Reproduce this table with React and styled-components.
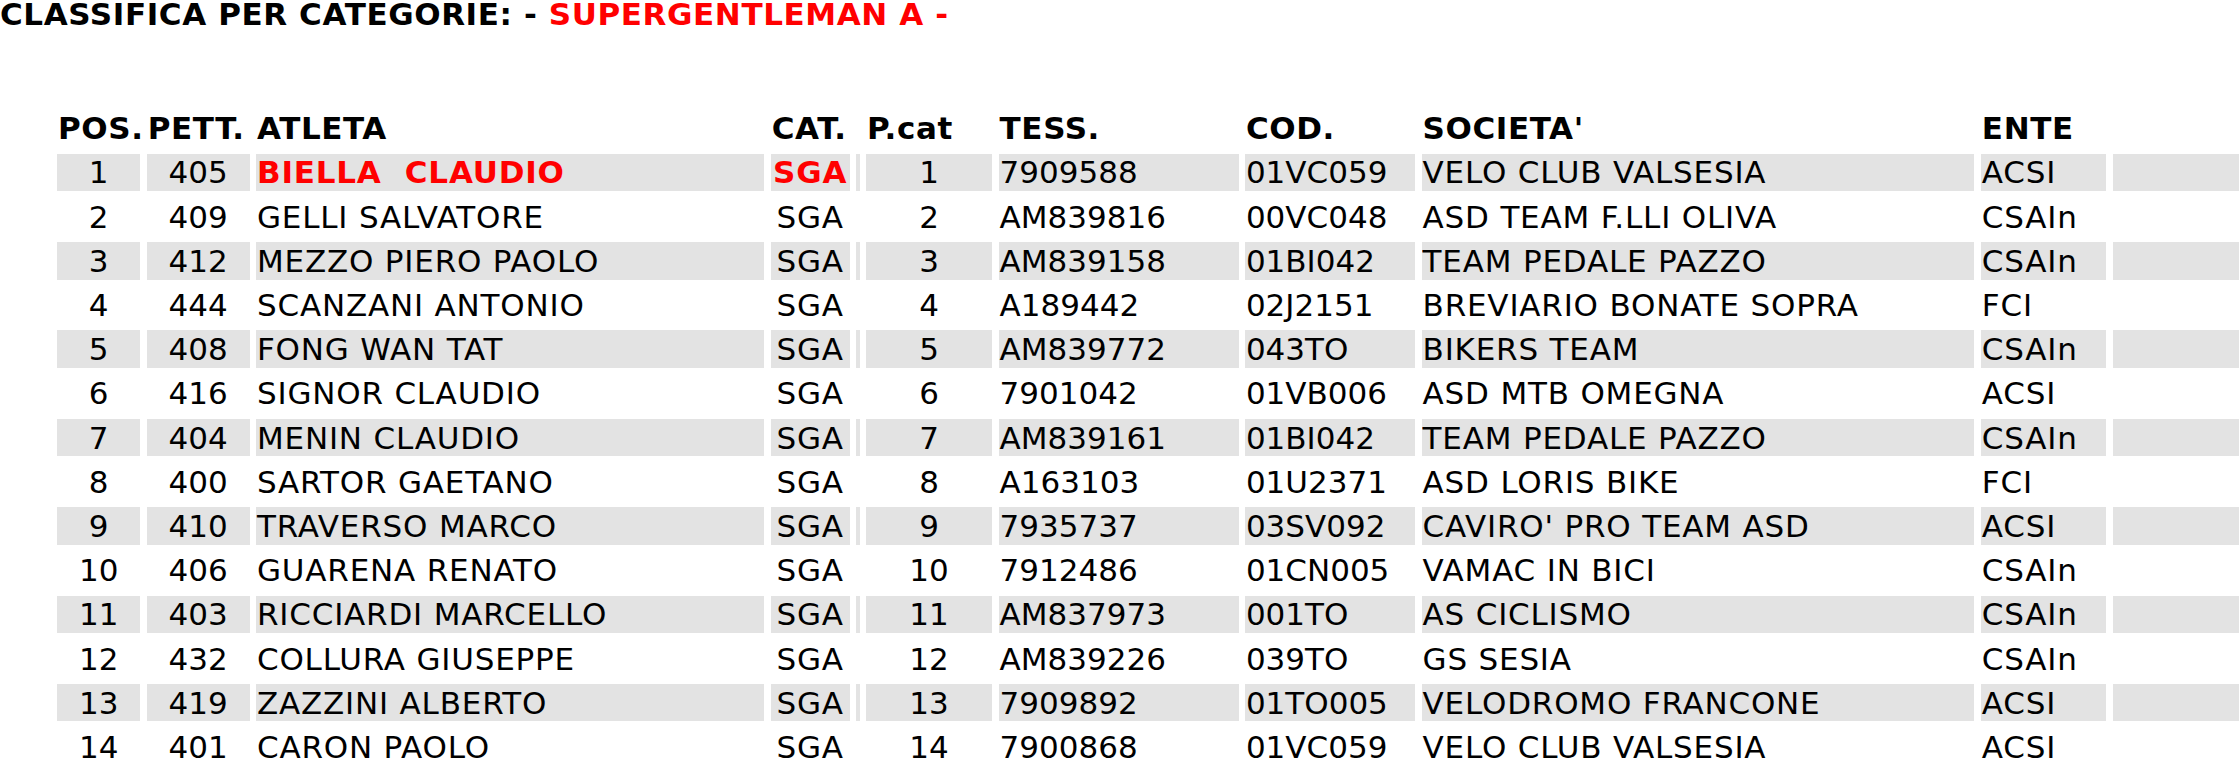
import React from "react";
import styled, { createGlobalStyle } from "styled-components";

const GlobalStyle = createGlobalStyle`
  html, body {
    margin: 0;
    padding: 0;
    background: #ffffff;
    overflow: hidden;
  }
  body {
    font-family: Verdana, "DejaVu Sans", sans-serif;
    color: #000000;
  }
`;

const Page = styled.div`
  width: 2239px;
  height: 759px;
  overflow: hidden;
`;

const Title = styled.h1`
  margin: 0;
  font-size: 31px;
  line-height: 28px;
  font-weight: bold;
  letter-spacing: 0.6px;
  white-space: pre;
`;

const Red = styled.span`
  color: #ff0000;
`;

const Grid = styled.div`
  display: grid;
  grid-template-columns: 83.3px 102.9px 508.3px 78.9px 3.6px 126.3px 239.9px 170.3px 552.9px 125.3px 160px;
  grid-auto-rows: 37.5px;
  column-gap: 6.4px;
  row-gap: 6.7px;
  margin: 81.5px 0 0 57px;
  width: max-content;
`;

const HeadCell = styled.div`
  display: flex;
  align-items: center;
  justify-content: flex-start;
  font-size: 31px;
  font-weight: bold;
  letter-spacing: 0.6px;
  white-space: pre;
  padding-left: 1px;
`;

const Cell = styled.div`
  display: flex;
  align-items: center;
  justify-content: ${(p) => (p.$align === "center" ? "center" : "flex-start")};
  padding-left: ${(p) => (p.$align === "center" ? "0" : "1px")};
  background: ${(p) => (p.$striped ? "#e3e3e3" : "transparent")};
  color: ${(p) => (p.$red ? "#ff0000" : "#000000")};
  font-weight: ${(p) => (p.$red ? "bold" : "normal")};
  letter-spacing: ${(p) => (p.$text ? "0.8px" : "0")};
  font-size: 31px;
  white-space: pre;
  overflow: hidden;
`;

const headers = ["POS.", "PETT.", "ATLETA", "CAT.", "", "P.cat", "TESS.", "COD.", "SOCIETA'", "ENTE", ""];

const rows = [
  ["1", "405", "BIELLA  CLAUDIO", "SGA", "1", "7909588", "01VC059", "VELO CLUB VALSESIA", "ACSI"],
  ["2", "409", "GELLI SALVATORE", "SGA", "2", "AM839816", "00VC048", "ASD TEAM F.LLI OLIVA", "CSAIn"],
  ["3", "412", "MEZZO PIERO PAOLO", "SGA", "3", "AM839158", "01BI042", "TEAM PEDALE PAZZO", "CSAIn"],
  ["4", "444", "SCANZANI ANTONIO", "SGA", "4", "A189442", "02J2151", "BREVIARIO BONATE SOPRA", "FCI"],
  ["5", "408", "FONG WAN TAT", "SGA", "5", "AM839772", "043TO", "BIKERS TEAM", "CSAIn"],
  ["6", "416", "SIGNOR CLAUDIO", "SGA", "6", "7901042", "01VB006", "ASD MTB OMEGNA", "ACSI"],
  ["7", "404", "MENIN CLAUDIO", "SGA", "7", "AM839161", "01BI042", "TEAM PEDALE PAZZO", "CSAIn"],
  ["8", "400", "SARTOR GAETANO", "SGA", "8", "A163103", "01U2371", "ASD LORIS BIKE", "FCI"],
  ["9", "410", "TRAVERSO MARCO", "SGA", "9", "7935737", "03SV092", "CAVIRO' PRO TEAM ASD", "ACSI"],
  ["10", "406", "GUARENA RENATO", "SGA", "10", "7912486", "01CN005", "VAMAC IN BICI", "CSAIn"],
  ["11", "403", "RICCIARDI MARCELLO", "SGA", "11", "AM837973", "001TO", "AS CICLISMO", "CSAIn"],
  ["12", "432", "COLLURA GIUSEPPE", "SGA", "12", "AM839226", "039TO", "GS SESIA", "CSAIn"],
  ["13", "419", "ZAZZINI ALBERTO", "SGA", "13", "7909892", "01TO005", "VELODROMO FRANCONE", "ACSI"],
  ["14", "401", "CARON PAOLO", "SGA", "14", "7900868", "01VC059", "VELO CLUB VALSESIA", "ACSI"],
];

export default function App() {
  return (
    <Page>
      <GlobalStyle />
      <Title>
        {"CLASSIFICA PER CATEGORIE: - "}
        <Red>SUPERGENTLEMAN A -</Red>
      </Title>
      <Grid>
        {headers.map((h, i) => (
          <HeadCell key={"h" + i}>{h}</HeadCell>
        ))}
        {rows.map((r, ri) => {
          const striped = ri % 2 === 0;
          const red = ri === 0;
          const [pos, pett, atleta, cat, pcat, tess, cod, soc, ente] = r;
          return (
            <React.Fragment key={ri}>
              <Cell $striped={striped} $align="center">{pos}</Cell>
              <Cell $striped={striped} $align="center">{pett}</Cell>
              <Cell $striped={striped} $red={red} $text>{atleta}</Cell>
              <Cell $striped={striped} $align="center" $red={red} $text>{cat}</Cell>
              <Cell $striped={striped} />
              <Cell $striped={striped} $align="center">{pcat}</Cell>
              <Cell $striped={striped}>{tess}</Cell>
              <Cell $striped={striped}>{cod}</Cell>
              <Cell $striped={striped} $text>{soc}</Cell>
              <Cell $striped={striped} $text>{ente}</Cell>
              <Cell $striped={striped} />
            </React.Fragment>
          );
        })}
      </Grid>
    </Page>
  );
}
